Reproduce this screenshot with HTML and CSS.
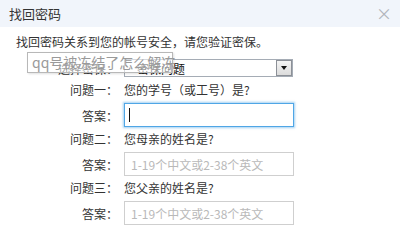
FILE: index.html
```html
<!DOCTYPE html>
<html lang="zh-CN">
<head>
<meta charset="utf-8">
<title>找回密码</title>
<link rel="stylesheet" href="styles.css">
</head>
<body>
<div class="dialog">
  <div class="titlebar">
    <span class="title">找回密码</span>
    <span class="close">×</span>
  </div>
  <div class="content">
    <p class="intro">找回密码关系到您的帐号安全，请您验证密保。</p>
    <div class="form">
      <div class="row row-select">
        <span class="label">选择密保：</span>
        <div class="select">
          <span class="select-text">密保问题</span>
          <span class="select-btn"><span class="tri"></span></span>
        </div>
      </div>
      <div class="row row-q">
        <span class="label">问题一：</span>
        <span class="question">您的学号（或工号）是?</span>
      </div>
      <div class="row row-a">
        <span class="label">答案：</span>
        <div class="input focused"><span class="caret"></span></div>
      </div>
      <div class="row row-q">
        <span class="label">问题二：</span>
        <span class="question">您母亲的姓名是?</span>
      </div>
      <div class="row row-a">
        <span class="label">答案：</span>
        <div class="input"><span class="placeholder">1-19个中文或2-38个英文</span></div>
      </div>
      <div class="row row-q">
        <span class="label">问题三：</span>
        <span class="question">您父亲的姓名是?</span>
      </div>
      <div class="row row-a">
        <span class="label">答案：</span>
        <div class="input"><span class="placeholder">1-19个中文或2-38个英文</span></div>
      </div>
    </div>
    <div class="tip">qq号被冻结了怎么解冻</div>
  </div>
</div>
</body>
</html>
```
FILE: styles.css
```css
* { box-sizing: border-box; }
html, body { margin: 0; padding: 0; background: #fff; }
body {
  font-family: "Microsoft YaHei", "Noto Sans CJK SC", "Noto Sans", sans-serif;
  font-size: 12px;
  color: #333;
}
.dialog { width: 400px; height: 241px; position: relative; background: #fff; }
.titlebar {
  height: 27px;
  background: #f1f5fb;
  display: flex;
  align-items: center;
  justify-content: space-between;
  padding: 0 8px 0 9px;
}
.title { font-size: 13px; color: #333; }
.close { font-size: 16px; color: #b0b4ba; line-height: 1; margin-top: -1px; }
.content { position: relative; padding-top: 5px; }
.intro { margin: 0; padding-left: 16px; line-height: 20px; }
.form { margin-top: 7px; }
.row { display: flex; align-items: center; }
.label { width: 118px; text-align: right; flex: none; color: #333; }
.row-select { height: 18px; }
.row-q { height: 20px; margin-top: 1px; }
.row-select + .row-q { margin-top: 2px; }
.row-a { height: 24px; margin-top: 4px; }
.question { margin-left: 6px; color: #333; }
.select {
  margin-left: 6px;
  width: 169px;
  height: 18px;
  border: 1px solid #a5acb5;
  display: flex;
  align-items: center;
  justify-content: space-between;
  padding-left: 12px;
  background: #fff;
}
.select-text { color: #111; }
.select-btn {
  width: 16px;
  height: 16px;
  border: 1px solid #8c9097;
  background: linear-gradient(#f4f4f4, #dcdcdc);
  display: flex;
  align-items: center;
  justify-content: center;
}
.tri {
  width: 0; height: 0;
  border-left: 3px solid transparent;
  border-right: 3px solid transparent;
  border-top: 4px solid #111;
}
.input {
  margin-left: 6px;
  width: 170px;
  height: 24px;
  border: 1px solid #cfcfcf;
  display: flex;
  align-items: center;
  padding-left: 6px;
  background: #fff;
}
.input.focused {
  border: 1px solid #4fa6e6;
  box-shadow: 0 0 2px 1px rgba(90, 170, 230, 0.55);
  padding-left: 4px;
}
.caret { width: 1px; height: 14px; background: #111; }
.placeholder { color: #b9b9b9; }
.tip {
  position: absolute;
  left: 27px;
  top: 25px;
  width: 146px;
  height: 21px;
  border: 1px solid #b8b8b8;
  background: rgba(255, 255, 255, 0.55);
  color: #9a9a9a;
  font-size: 14px;
  line-height: 19px;
  padding-left: 4px;
  white-space: nowrap;
  box-shadow: 1px 1px 2px rgba(0,0,0,0.12);
}
```
